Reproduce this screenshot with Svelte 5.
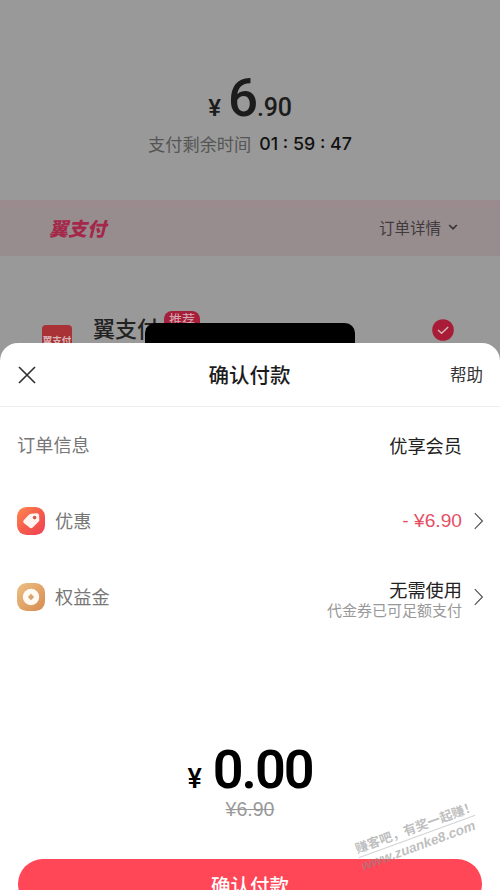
<script lang="ts">
  const price = '6.90';
  const [whole, cents] = price.split('.');
  const timeLeft = ['01', '59', '47'];
</script>

{#snippet arrow()}
  <svg class="arrow" viewBox="0 0 10 18" width="10" height="18">
    <path d="M.8 1.2L8.4 9 .8 16.8" fill="none" stroke="#555" stroke-width="1.2" />
  </svg>
{/snippet}

<div class="screen">
  <section class="cashier">
    <div class="total">
      <span class="total-yen">¥</span>
      <span class="total-whole">{whole}</span>
      <span class="total-cents">.{cents}</span>
    </div>
    <div class="countdown">
      <span>支付剩余时间</span>
      <span class="time">{timeLeft.join(' : ')}</span>
    </div>
  </section>

  <section class="merchant">
    <span class="brand">翼支付</span>
    <span class="details">
      订单详情
      <svg viewBox="0 0 10 8" width="10" height="8">
        <path d="M1.2 2l3.8 3.8L8.8 2" fill="none" stroke="#333" stroke-width="1.6" />
      </svg>
    </span>
  </section>

  <section class="method">
    <span class="method-logo">翼支付</span>
    <span class="method-name">翼支付</span>
    <span class="badge">推荐</span>
    <svg class="checked" viewBox="0 0 22 22" width="22" height="22">
      <circle cx="11" cy="11" r="10.8" fill="#a91c37" />
      <path d="M6 11l3.6 3.3L16.2 8" fill="none" stroke="#d5b5bb" stroke-width="1.5" />
    </svg>
    <div class="toast"></div>
  </section>

  <main class="sheet">
    <header class="sheet-head">
      <svg class="close" viewBox="0 0 18 18" width="18" height="18">
        <path d="M1 1l16 16M17 1L1 17" stroke="#333" stroke-width="1.7" />
      </svg>
      <h1>确认付款</h1>
      <span class="help">帮助</span>
    </header>

    <div class="row">
      <span class="label">订单信息</span>
      <span class="value">优享会员</span>
    </div>

    <div class="row">
      <svg class="row-icon" viewBox="0 0 28 28" width="28" height="28">
        <defs>
          <linearGradient id="coupon" x1="0" y1="0" x2="1" y2="1">
            <stop offset="0" stop-color="#ff8a50" />
            <stop offset="0.5" stop-color="#f65c4b" />
            <stop offset="1" stop-color="#ef4056" />
          </linearGradient>
        </defs>
        <rect width="28" height="28" rx="9.5" fill="url(#coupon)" />
        <path
          d="M14.2 6.8l5.5-.6q2.2-.2 2.4 2l.2 4.8q0 1-.8 1.8l-5.8 5.6q-1.6 1.5-3.2 0L6.8 15.9q-1.4-1.5.1-3L12.1 7.6q.8-.7 2.1-.8z"
          fill="#fff4f0"
        />
        <circle cx="17.6" cy="10.6" r="1.8" fill="#d0594b" />
      </svg>
      <span class="label">优惠</span>
      <span class="value discount">- ¥{price}</span>
      {@render arrow()}
    </div>

    <div class="row">
      <svg class="row-icon" viewBox="0 0 28 28" width="28" height="28">
        <defs>
          <linearGradient id="gold" x1="0" y1="0" x2="1" y2="1">
            <stop offset="0" stop-color="#edc084" />
            <stop offset="1" stop-color="#d68b50" />
          </linearGradient>
        </defs>
        <rect width="28" height="28" rx="9.5" fill="url(#gold)" />
        <circle cx="14" cy="14" r="8.2" fill="#fffaf3" />
        <path d="M14 10.8l3.2 3.2-3.2 3.2-3.2-3.2z" fill="#d9a571" />
      </svg>
      <span class="label">权益金</span>
      <span class="value stacked">
        <span>无需使用</span>
        <small>代金券已可足额支付</small>
      </span>
      {@render arrow()}
    </div>

    <div class="due">
      <div class="amount">
        <span class="amount-yen">¥</span>
        <span class="amount-num">0.00</span>
      </div>
      <s class="original">¥{price}</s>
    </div>

    <button class="pay">确认付款</button>
  </main>

  <div class="watermark">
    <span class="slogan">赚客吧，有奖一起赚！</span>
    <span class="site">www.zuanke8.com</span>
  </div>
</div>

<style>
  :global(body) {
    margin: 0;
  }

  .screen {
    position: relative;
    display: flex;
    flex-direction: column;
    width: 500px;
    height: 890px;
    overflow: hidden;
    background: #999;
    color: #222;
    font-family: "Liberation Sans", "Noto Sans CJK SC", sans-serif;
    white-space: nowrap;
  }

  .cashier {
    display: flex;
    flex-direction: column;
    align-items: center;
    height: 200px;
    flex-shrink: 0;
    box-sizing: border-box;
    padding-top: 67px;
  }

  .total {
    display: flex;
    align-items: baseline;
    height: 63px;
    line-height: 63px;
    font-family: Roboto, sans-serif;
    font-weight: 500;
    color: #1c1c1c;
  }

  .total-yen {
    margin-right: 7px;
    font-size: 24px;
  }

  .total-whole {
    font-size: 53px;
    font-weight: 500;
    letter-spacing: -1px;
  }

  .total-cents {
    font-size: 25px;
    letter-spacing: -0.2px;
  }

  .countdown {
    display: flex;
    align-items: center;
    gap: 8px;
    height: 26px;
    font-size: 17.2px;
    color: #555;
  }

  .time {
    color: #111;
    font-family: Inter, sans-serif;
    font-size: 17.8px;
    font-weight: 500;
  }

  .merchant {
    display: flex;
    align-items: center;
    justify-content: space-between;
    height: 56px;
    flex-shrink: 0;
    box-sizing: border-box;
    padding: 0 42px 2px 49px;
    background: linear-gradient(#9b8b8f 8px, #978d8f 9px);
  }

  .brand {
    color: #a32849;
    font-size: 19px;
    font-weight: 900;
    font-style: italic;
  }

  .details {
    display: flex;
    align-items: center;
    gap: 7px;
    color: #403a3c;
    font-size: 15.5px;
  }

  .method {
    position: relative;
    display: flex;
    align-items: flex-start;
    height: 87px;
    flex-shrink: 0;
    box-sizing: border-box;
    padding: 55px 46px 0 42px;
  }

  .method-logo {
    width: 30px;
    height: 30px;
    margin-top: 14px;
    border-radius: 4px;
    background: #a93237;
    color: #d9b5b6;
    font-size: 9.5px;
    font-weight: 700;
    line-height: 32px;
    text-align: center;
  }

  .method-name {
    margin-left: 21px;
    color: #222;
    font-size: 22px;
    font-weight: 500;
    line-height: 37px;
  }

  .badge {
    width: 36px;
    height: 24px;
    margin-left: 5px;
    border-radius: 8px;
    background: #a61f3a;
    color: #d6aab3;
    font-size: 13px;
    line-height: 18px;
    text-align: center;
  }

  .checked {
    margin: 8px 0 0 auto;
  }

  /* dark toast partly hidden behind the sheet */
  .toast {
    position: absolute;
    top: 67px;
    left: 145px;
    width: 210px;
    height: 40px;
    border-radius: 10px;
    background: #000;
  }

  .sheet {
    position: relative;
    display: flex;
    flex-direction: column;
    height: 547px;
    flex-shrink: 0;
    border-radius: 18px 18px 0 0;
    background: #fff;
    overflow: hidden;
  }

  .sheet-head {
    display: grid;
    grid-template-columns: 1fr auto 1fr;
    align-items: center;
    height: 64px;
    flex-shrink: 0;
    box-sizing: border-box;
    padding: 0 17px 0 18px;
    border-bottom: 1px solid #eee;
  }

  h1 {
    margin: 0;
    padding: 0 2px 2px 0;
    font-size: 20.5px;
    font-weight: 500;
    color: #1c1c1c;
  }

  .help {
    justify-self: end;
    padding-bottom: 1px;
    color: #333;
    font-size: 16.5px;
  }

  .row {
    display: flex;
    align-items: center;
    height: 76px;
    flex-shrink: 0;
    box-sizing: border-box;
    padding: 0 38px 0 17px;
    font-size: 18.2px;
  }

  .row-icon {
    margin-right: 10px;
  }

  .label {
    padding-bottom: 2px;
    color: #777;
  }

  .value {
    margin-left: auto;
    padding-bottom: 1px;
    color: #222;
  }

  .discount {
    padding-bottom: 0;
    color: #e55066;
    font-size: 19.2px;
  }

  .stacked {
    display: flex;
    flex-direction: column;
    align-items: flex-end;
    line-height: 20px;
    padding-top: 8px;
  }

  .stacked small {
    color: #999;
    font-size: 15px;
  }

  .arrow {
    margin: 0 -22px 0 12px;
  }

  .due {
    display: flex;
    flex-direction: column;
    align-items: center;
    margin-top: 103px;
    flex: 1;
  }

  .amount {
    display: flex;
    align-items: baseline;
    height: 61px;
    line-height: 64px;
    color: #000;
    font-family: Roboto, sans-serif;
  }

  .amount-yen {
    margin-right: 11px;
    font-size: 27px;
    font-weight: 500;
  }

  .amount-num {
    font-size: 54px;
    font-weight: 600;
    letter-spacing: -2px;
  }

  .original {
    color: #999;
    font-size: 19.5px;
    line-height: 20px;
  }

  .pay {
    height: 50px;
    margin: 0 18px -19px;
    padding: 0;
    flex-shrink: 0;
    border: 0;
    border-radius: 25px;
    background: #ff4757;
    color: #fff;
    font-family: inherit;
    font-size: 19.5px;
    font-weight: 500;
  }

  .watermark {
    position: absolute;
    left: 355px;
    top: 819px;
    display: flex;
    flex-direction: column;
    width: 124px;
    transform: rotate(-20deg);
    color: rgba(135, 135, 135, 0.55);
    font-weight: 700;
  }

  .slogan {
    border-bottom: 1px solid rgba(145, 145, 145, 0.4);
    font-size: 12.8px;
    line-height: 17px;
  }

  .site {
    font-size: 13.6px;
    font-style: italic;
    line-height: 17px;
  }
</style>
